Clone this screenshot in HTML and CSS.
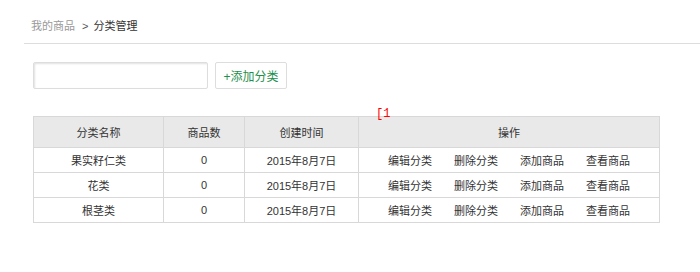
FILE: index.html
```html
<!DOCTYPE html>
<html lang="zh-CN">
<head>
    <meta charset="UTF-8">
    <title>分类管理</title>
    <link rel="stylesheet" href="styles.css">
</head>
<body>
    <div class="breadcrumb">
        <span class="crumb-parent">我的商品</span>
        <span class="crumb-sep">&gt;</span>
        <span class="crumb-current">分类管理</span>
    </div>

    <div class="page">
        <form class="toolbar">
            <input type="text" class="cat-input">
            <button type="button" class="add-btn">+添加分类</button>
        </form>

        <div class="table-wrap">
            <span class="debug-mark">[1</span>
            <table class="cat-table">
                <thead>
                    <tr>
                        <th class="col-name">分类名称</th>
                        <th class="col-count">商品数</th>
                        <th class="col-date">创建时间</th>
                        <th>操作</th>
                    </tr>
                </thead>
                <tbody>
                    <tr>
                        <td>果实籽仁类</td>
                        <td>0</td>
                        <td>2015年8月7日</td>
                        <td class="actions"><a>编辑分类</a><a>删除分类</a><a>添加商品</a><a>查看商品</a></td>
                    </tr>
                    <tr>
                        <td>花类</td>
                        <td>0</td>
                        <td>2015年8月7日</td>
                        <td class="actions"><a>编辑分类</a><a>删除分类</a><a>添加商品</a><a>查看商品</a></td>
                    </tr>
                    <tr>
                        <td>根茎类</td>
                        <td>0</td>
                        <td>2015年8月7日</td>
                        <td class="actions"><a>编辑分类</a><a>删除分类</a><a>添加商品</a><a>查看商品</a></td>
                    </tr>
                </tbody>
            </table>
        </div>
    </div>
</body>
</html>
```

FILE: styles.css
```css
body {
    margin: 0;
    padding: 0;
    background: #fff;
    color: #333;
    font-family: "Liberation Sans", "Noto Sans CJK SC", sans-serif;
    font-size: 11px;
}
.breadcrumb {
    display: flex;
    align-items: center;
    margin-left: 24px;
    height: 16px;
    padding: 18px 7px 9px;
    line-height: 16px;
    border-bottom: 1px solid #ddd;
}
.crumb-parent {
    color: #999;
}
.crumb-sep {
    color: #555;
    margin: 0 5px 0 7px;
}
.crumb-current {
    color: #333;
}
.page {
    padding: 18px 0 0 33px;
}
.toolbar {
    display: flex;
    gap: 7px;
    margin: 0;
}
.cat-input {
    box-sizing: border-box;
    width: 175px;
    height: 27px;
    margin: 0;
    border: 1px solid #ddd;
    border-radius: 2px;
    box-shadow: inset 1px 1px 2px rgba(0, 0, 0, 0.12);
}
.add-btn {
    box-sizing: border-box;
    width: 72px;
    height: 27px;
    padding: 0;
    background: #fff;
    border: 1px solid #ddd;
    border-radius: 2px;
    color: #1f8f4e;
    font-family: inherit;
    font-size: 12px;
    cursor: pointer;
}
.table-wrap {
    position: relative;
    margin-top: 27px;
}
.debug-mark {
    position: absolute;
    left: 343px;
    top: -7px;
    color: #f00;
    font-family: "Liberation Mono", monospace;
    font-size: 12px;
    line-height: 10px;
}
.cat-table {
    width: 627px;
    border-collapse: collapse;
    table-layout: fixed;
    border: 1px solid #d8d8d8;
}
.cat-table th,
.cat-table td {
    border: 1px solid #d8d8d8;
    text-align: center;
    padding: 0;
}
.cat-table th {
    height: 30px;
    background: #e9e9e9;
    font-weight: normal;
}
.cat-table td {
    height: 24px;
}
.col-name {
    width: 129px;
}
.col-count {
    width: 80px;
}
.col-date {
    width: 113px;
}
.actions a {
    display: inline-block;
    margin: 0 11px;
    color: #333;
    text-decoration: none;
    cursor: pointer;
}
```
